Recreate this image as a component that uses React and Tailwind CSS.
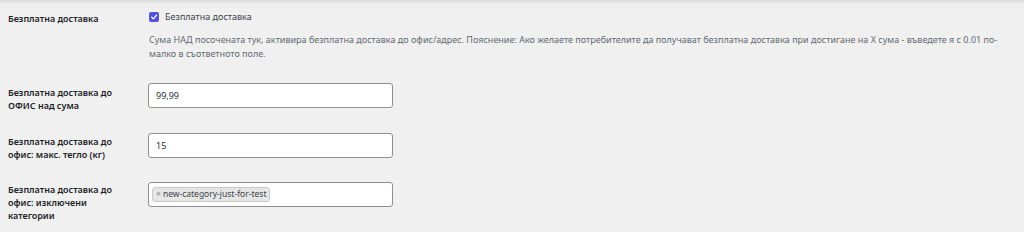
import React from "react";

const font = { fontFamily: '"Noto Sans", "Liberation Sans", sans-serif' };

const Label = ({ children, className = "" }) => (
  <div className={`w-[141px] shrink-0 pl-[8px] pr-[16px] text-[9px] leading-[13px] font-semibold text-[#1d2327] ${className}`}>
    {children}
  </div>
);

const TextInput = ({ value }) => (
  <div className="w-[245px] h-[25px] bg-white border border-[#8c8f94] rounded-[3px] flex items-center px-[7px] text-[9px] text-[#2c3338]">
    {value}
  </div>
);

export default function App() {
  return (
    <div lang="bg" style={font} className="w-[1024px] h-[232px] bg-[#f0f0f1] overflow-hidden relative">
      <div className="absolute top-0 left-0 right-0 h-[5px] bg-gradient-to-b from-[#dcdcde] to-[#f0f0f1]" />

      {/* free shipping checkbox */}
      <div className="flex pt-[11px]">
        <Label className="pt-[1px]">Безплатна доставка</Label>
        <div className="pl-[8px]">
          <label className="flex items-center gap-[6px] text-[9px] text-[#3c434a] h-[12px]">
            <span className="w-[10px] h-[10px] rounded-[2px] bg-[#5053d9] flex items-center justify-center">
              <svg width="8" height="8" viewBox="0 0 10 10">
                <path d="M2 5.2 L4.2 7.4 L8.2 2.6" fill="none" stroke="white" strokeWidth="1.6" strokeLinecap="round" strokeLinejoin="round" />
              </svg>
            </span>
            Безплатна доставка
          </label>
          <p className="mt-[10px] w-[870px] text-[9px] leading-[14px] text-[#646970]">
            Сума НАД посочената тук, активира безплатна доставка до офис/адрес. Пояснение: Ако желаете потребителите да получават безплатна доставка при достигане на X сума - въведете я с 0.01 по-малко в съответното поле.
          </p>
        </div>
      </div>

      <div className="flex items-start mt-[22px]">
        <Label className="pt-[3px]">Безплатна доставка до ОФИС над сума</Label>
        <div className="pl-[7px]">
          <TextInput value="99,99" />
        </div>
      </div>

      <div className="flex items-start mt-[21px]">
        <Label className="pt-[2px]">Безплатна доставка до офис: макс. тегло (кг)</Label>
        <div className="pl-[7px]">
          <TextInput value="15" />
        </div>
      </div>

      <div className="flex items-start mt-[21px]">
        <Label className="pt-[1px]">Безплатна доставка до офис: изключени категории</Label>
        <div className="pl-[7px]">
          <div className="w-[245px] h-[25px] bg-white border border-[#8c8f94] rounded-[3px] flex items-center px-[3px]">
            <span className="flex items-center h-[15px] px-[3px] bg-[#e6e6e6] border border-[#c8c8c8] rounded-[3px] text-[8.5px] text-[#3c434a]">
              <span className="mr-[2px] text-[#8c8f94]">×</span>new-category-just-for-test
            </span>
          </div>
        </div>
      </div>
    </div>
  );
}
